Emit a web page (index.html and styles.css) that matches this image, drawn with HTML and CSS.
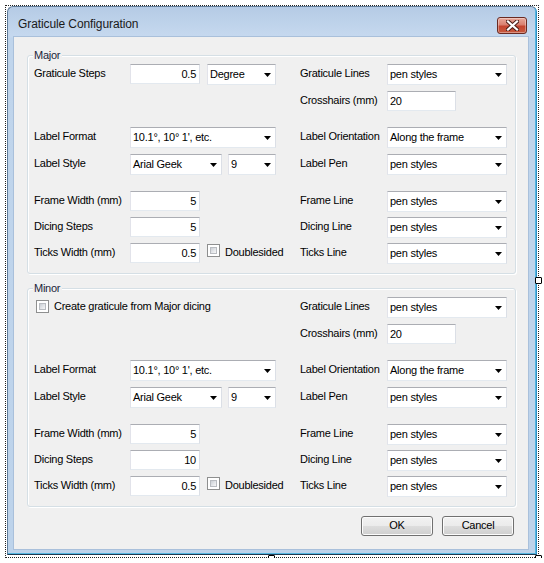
FILE: index.html
```html
<!DOCTYPE html>
<html>
<head>
<meta charset="utf-8">
<title>Graticule Configuration</title>
<link rel="stylesheet" href="styles.css">
</head>
<body>
<div class="stage">
  <div class="window">
    <div class="titlebar">
      <span class="title">Graticule Configuration</span>
      <div class="close">
        <svg width="13" height="11" viewBox="0 0 13 11"><path d="M2 1.5 L11 9.5 M11 1.5 L2 9.5" stroke="#4a1c16" stroke-width="4.2" stroke-linecap="square"/><path d="M2 1.5 L11 9.5 M11 1.5 L2 9.5" stroke="#ffffff" stroke-width="2.2" stroke-linecap="square"/></svg>
      </div>
    </div>
    <div class="client">
      <div class="group">
        <span class="legend">Major</span>
        <div class="grid">
          <div class="lbl">Graticule Steps</div>
          <div class="ctl"><div class="field w70">0.5</div><div class="combo w69 ml7">Degree<i class="arrow"></i></div></div>
          <div class="lbl">Graticule Lines</div>
          <div class="ctl"><div class="combo w120">pen styles<i class="arrow"></i></div></div>

          <div class="lbl"></div><div class="ctl"></div>
          <div class="lbl">Crosshairs (mm)</div>
          <div class="ctl"><div class="field w69 left">20</div></div>

          <div class="lbl">Label Format</div>
          <div class="ctl"><div class="combo w146">10.1°, 10° 1', etc.<i class="arrow"></i></div></div>
          <div class="lbl">Label Orientation</div>
          <div class="ctl"><div class="combo w120">Along the frame<i class="arrow"></i></div></div>

          <div class="lbl">Label Style</div>
          <div class="ctl"><div class="combo w92">Arial Geek<i class="arrow"></i></div><div class="combo w48 ml6">9<i class="arrow"></i></div></div>
          <div class="lbl">Label Pen</div>
          <div class="ctl"><div class="combo w120">pen styles<i class="arrow"></i></div></div>

          <div class="lbl">Frame Width (mm)</div>
          <div class="ctl"><div class="field w70">5</div></div>
          <div class="lbl">Frame Line</div>
          <div class="ctl"><div class="combo w120">pen styles<i class="arrow"></i></div></div>

          <div class="lbl">Dicing Steps</div>
          <div class="ctl"><div class="field w70">5</div></div>
          <div class="lbl">Dicing Line</div>
          <div class="ctl"><div class="combo w120">pen styles<i class="arrow"></i></div></div>

          <div class="lbl">Ticks Width (mm)</div>
          <div class="ctl"><div class="field w70">0.5</div><span class="check ml7 mt1"></span><span class="checktext">Doublesided</span></div>
          <div class="lbl">Ticks Line</div>
          <div class="ctl"><div class="combo w120">pen styles<i class="arrow"></i></div></div>
        </div>
      </div>

      <div class="group minor">
        <span class="legend">Minor</span>
        <div class="grid">
          <div class="ctl span2"><span class="check ml2 mt3"></span><span class="checktext">Create graticule from Major dicing</span></div>
          <div class="lbl">Graticule Lines</div>
          <div class="ctl"><div class="combo w120">pen styles<i class="arrow"></i></div></div>

          <div class="lbl"></div><div class="ctl"></div>
          <div class="lbl">Crosshairs (mm)</div>
          <div class="ctl"><div class="field w69 left">20</div></div>

          <div class="lbl">Label Format</div>
          <div class="ctl"><div class="combo w146">10.1°, 10° 1', etc.<i class="arrow"></i></div></div>
          <div class="lbl">Label Orientation</div>
          <div class="ctl"><div class="combo w120">Along the frame<i class="arrow"></i></div></div>

          <div class="lbl">Label Style</div>
          <div class="ctl"><div class="combo w92">Arial Geek<i class="arrow"></i></div><div class="combo w48 ml6">9<i class="arrow"></i></div></div>
          <div class="lbl">Label Pen</div>
          <div class="ctl"><div class="combo w120">pen styles<i class="arrow"></i></div></div>

          <div class="lbl">Frame Width (mm)</div>
          <div class="ctl"><div class="field w70">5</div></div>
          <div class="lbl">Frame Line</div>
          <div class="ctl"><div class="combo w120">pen styles<i class="arrow"></i></div></div>

          <div class="lbl">Dicing Steps</div>
          <div class="ctl"><div class="field w70">10</div></div>
          <div class="lbl">Dicing Line</div>
          <div class="ctl"><div class="combo w120">pen styles<i class="arrow"></i></div></div>

          <div class="lbl">Ticks Width (mm)</div>
          <div class="ctl"><div class="field w70">0.5</div><span class="check ml7 mt1"></span><span class="checktext">Doublesided</span></div>
          <div class="lbl">Ticks Line</div>
          <div class="ctl"><div class="combo w120">pen styles<i class="arrow"></i></div></div>
        </div>
      </div>

      <div class="buttons">
        <div class="btn">OK</div>
        <div class="btn">Cancel</div>
      </div>
    </div>
  </div>
  <span class="handle h-right"></span>
  <span class="handle h-bottom"></span>
  <span class="handle h-corner"></span>
</div>
</body>
</html>
```
FILE: styles.css
```css
* { box-sizing: border-box; }
html, body { margin: 0; padding: 0; background: #ffffff; }
body {
  font-family: "Liberation Sans", Arial, sans-serif;
  font-size: 11px;
  letter-spacing: -0.25px;
  color: #000;
}
.stage {
  position: relative;
  margin: 5px 0 0 5px;
  width: 534px;
  height: 553px;
  border: 1px dotted #222;
  padding: 0 1px 2px 1px;
}
.window {
  width: 530px;
  height: 549px;
  border: 1px solid #5f7b98;
  border-right-color: #2f8fc4;
  border-bottom-color: #1d3a52;
  border-radius: 6px 6px 0 0;
  padding: 0 8px 5px 6px;
  background: linear-gradient(to bottom, #b5cbe5 0px, #c6d9ef 30px, #c0d5ec 31px, #bdd3eb 100%);
  box-shadow: inset -1px -1px 0 #55b6e0;
}
.titlebar {
  height: 30px;
  display: flex;
  justify-content: space-between;
  align-items: flex-start;
}
.title {
  margin-top: 9px;
  padding-left: 4px;
  font-size: 12px;
  line-height: 16px;
  letter-spacing: -0.1px;
  color: #1a1a1a;
}
.close {
  margin-top: 10px;
  margin-right: 1px;
  width: 30px;
  height: 17px;
  border: 1px solid #6a2a22;
  border-radius: 3px;
  background: linear-gradient(to bottom, #e8a89a 0%, #d98070 45%, #c4442f 55%, #c75a40 100%);
  box-shadow: inset 0 0 0 1px rgba(255,255,255,0.35);
  display: flex;
  align-items: center;
  justify-content: center;
}
.close svg { display: block; }
.client {
  height: 512px;
  background: #f0f0f0;
  padding: 18px 12px 0 13px;
  box-shadow: 0 0 0 1px #a9c0db;
}
.group {
  position: relative;
  width: 489px;
  border: 1px solid #d5dfe5;
  border-radius: 3px;
  padding: 8px 8px 9px 6px;
  box-shadow: inset 1px 1px 0 #ffffff, 1px 1px 0 #ffffff;
}
.minor { margin-top: 14px; }
.legend {
  position: absolute;
  top: -8px;
  left: 5px;
  padding: 0 2px 0 1px;
  background: #f0f0f0;
  line-height: 14px;
  color: #1b1f3a;
}
.grid {
  display: grid;
  grid-template-columns: 96px 170px 87px 120px;
  grid-template-rows: 27px 36px 27px 37px 26px 26px 21px;
}
.lbl {
  line-height: 18px;
  white-space: nowrap;
}
.ctl {
  display: flex;
  align-items: flex-start;
}
.span2 { grid-column: span 2; }
.field {
  height: 20px;
  line-height: 18px;
  background: #fff;
  border: 1px solid #e2e3ea;
  border-top-color: #abadb3;
  border-bottom-color: #e3e9ef;
  border-right-color: #dbdfe6;
  padding: 0 3px;
  text-align: right;
  white-space: nowrap;
}
.field.left { text-align: left; padding-left: 2px; }
.combo {
  position: relative;
  height: 21px;
  line-height: 19px;
  background: #fff;
  border: 1px solid #e2e3ea;
  border-top-color: #abadb3;
  border-bottom-color: #e3e9ef;
  border-right-color: #dbdfe6;
  padding: 0 0 0 2px;
  white-space: nowrap;
}
.arrow {
  position: absolute;
  right: 4px;
  top: 8px;
  width: 7px;
  height: 4px;
  background: #000;
  clip-path: polygon(0 0, 100% 0, 50% 100%);
}
.w70 { width: 70px; }
.w69 { width: 69px; }
.w146 { width: 146px; }
.w92 { width: 92px; }
.w48 { width: 48px; }
.w120 { width: 120px; }
.ml7 { margin-left: 7px; }
.ml6 { margin-left: 6px; }
.ml2 { margin-left: 2px; }
.mt1 { margin-top: 1px; }
.mt3 { margin-top: 3px; }
.check {
  flex: none;
  width: 13px;
  height: 13px;
  border: 1px solid #8e8f8f;
  background: #fff;
  padding: 2px;
}
.check::before {
  content: "";
  display: block;
  width: 7px;
  height: 7px;
  background: linear-gradient(135deg, #cbcfd5 0%, #e6e8eb 60%, #f6f6f6 100%);
  border: 1px solid #b9bcc1;
  box-sizing: border-box;
}
.checktext {
  margin-left: 5px;
  line-height: 18px;
  white-space: nowrap;
}
.buttons {
  display: flex;
  justify-content: flex-end;
  gap: 9px;
  margin-top: 9px;
  padding-right: 2px;
}
.btn {
  width: 72px;
  height: 20px;
  border: 1px solid #707070;
  border-radius: 3px;
  background: linear-gradient(to bottom, #f2f2f2 0%, #ebebeb 50%, #dddddd 51%, #cfcfcf 100%);
  box-shadow: inset 0 0 0 1px #fcfcfc;
  text-align: center;
  line-height: 17px;
}
.handle {
  position: absolute;
  width: 7px;
  height: 7px;
  border: 1px solid #000;
  background: #fff;
  border-radius: 1px;
}
.h-right { left: 529px; top: 271px; }
.h-bottom { left: 262px; top: 549px; }
.h-corner { left: 529px; top: 549px; }
```
